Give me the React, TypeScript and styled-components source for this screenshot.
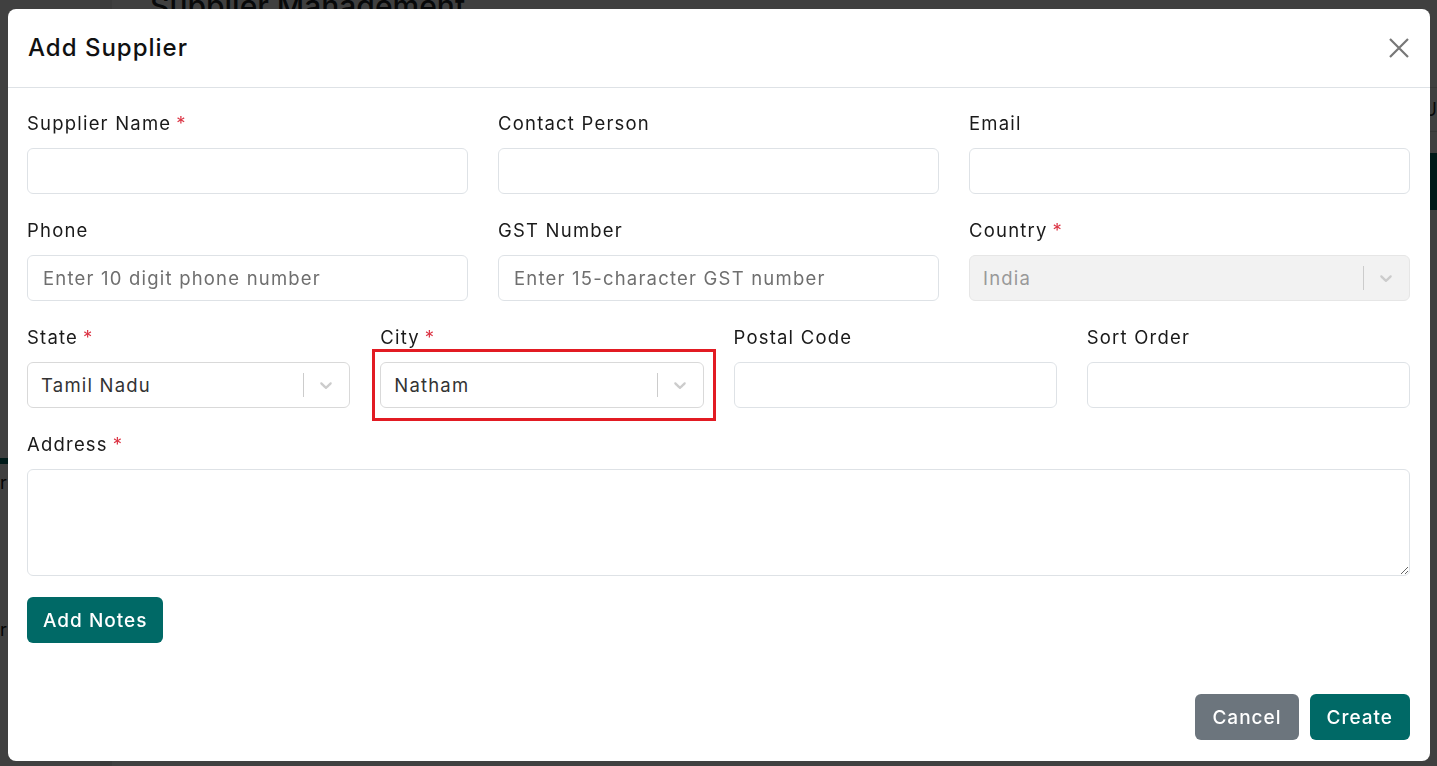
import React from "react";
import styled, { createGlobalStyle } from "styled-components";

const teal = "#006966";
const border = "#dee2e6";

const GlobalStyle = createGlobalStyle`
  html, body { margin: 0; padding: 0; }
  body {
    font-family: Inter, "Noto Sans", sans-serif;
    color: #212529;
    overflow: hidden;
  }
  * { box-sizing: border-box; }
`;

/* ---------- page behind the dialog ---------- */

const Page = styled.div`
  display: flex;
  height: 100vh;
  background: #fff;
`;

const Sidebar = styled.aside`
  width: 112px;
  flex-shrink: 0;
  border-right: 12px solid #e9e9e9;
  padding-top: 458px;
  display: flex;
  flex-direction: column;
`;

const NavItem = styled.div<{ $active?: boolean }>`
  height: 57px;
  display: flex;
  align-items: center;
  font-size: 18px;
  color: #111;
  background: ${(p) => (p.$active ? teal : "transparent")};
  margin-bottom: ${(p) => (p.$active ? "8px" : "126px")};
`;

const Main = styled.main`
  flex: 1;
  padding-left: 38px;
  display: flex;
  flex-direction: column;
`;

const PageTitle = styled.h1`
  margin: -12px 0 0;
  font-size: 30px;
  font-weight: 500;
  height: 100px;
  border-bottom: 1px solid #ddd;
`;

const Toolbar = styled.div`
  height: 44px;
  display: flex;
  justify-content: flex-end;
  align-items: center;
  font-size: 18px;
  border-bottom: 1px solid #ddd;
  margin-bottom: 21px;
`;

const TableHead = styled.div`
  height: 57px;
  background: ${teal};
`;

const Backdrop = styled.div`
  position: fixed;
  inset: 0;
  background: rgba(0, 0, 0, 0.75);
`;

/* ---------- dialog ---------- */

const Modal = styled.div`
  position: fixed;
  top: 9px;
  left: 8px;
  width: 1422px;
  height: 752px;
  background: #fff;
  border-radius: 8px;
  display: flex;
  flex-direction: column;
  letter-spacing: 1.2px;
`;

const Header = styled.header`
  height: 79px;
  flex-shrink: 0;
  display: flex;
  align-items: center;
  justify-content: space-between;
  padding: 0 19px 1px 20px;
  border-bottom: 1px solid ${border};
`;

const Title = styled.h2`
  margin: 0;
  font-size: 24px;
  font-weight: 500;
  letter-spacing: 1px;
  color: #111;
`;

const CloseButton = styled.button`
  border: 0;
  background: none;
  padding: 0;
  width: 24px;
  height: 24px;
  display: flex;
  align-items: center;
  justify-content: center;
  cursor: pointer;
`;

const Body = styled.div`
  padding: 22px 20px 0 19px;
  display: flex;
  flex-direction: column;
  gap: 23px;
`;

const Row = styled.div<{ $cols: number }>`
  display: grid;
  grid-template-columns: repeat(${(p) => p.$cols}, 1fr);
  column-gap: 30px;
`;

const Field = styled.div`
  display: flex;
  flex-direction: column;
  gap: 11px;
`;

const Label = styled.label`
  font-size: 18.5px;
  line-height: 27px;
  color: #1a1a1a;
`;

const Required = styled.span`
  color: #dc3545;
  margin-left: 5px;
`;

const Input = styled.input`
  height: 46px;
  width: 100%;
  border: 1px solid ${border};
  border-radius: 6px;
  padding: 0 15px;
  font-family: inherit;
  font-size: 18.5px;
  letter-spacing: 1.2px;
  color: #333;
  outline: none;
  &::placeholder { color: #6f6f6f; }
`;

const TextArea = styled.textarea`
  height: 107px;
  width: 100%;
  border: 1px solid ${border};
  border-radius: 6px;
  padding: 10px 15px;
  font-family: inherit;
  font-size: 18.5px;
  resize: vertical;
  outline: none;
`;

const SelectBox = styled.div<{ $disabled?: boolean }>`
  position: relative;
  height: 46px;
  display: flex;
  align-items: center;
  border: 1px solid ${(p) => (p.$disabled ? "#e6e6e6" : "#d9d9d9")};
  border-radius: 6px;
  background: ${(p) => (p.$disabled ? "#f2f2f2" : "#fff")};
  font-size: 18.5px;
`;

const SelectValue = styled.div<{ $disabled?: boolean }>`
  flex: 1;
  padding-left: 13px;
  color: ${(p) => (p.$disabled ? "#999" : "#333")};
`;

const Separator = styled.span`
  width: 1px;
  align-self: stretch;
  margin: 10px 0;
  background: #ccc;
`;

const Indicator = styled.span`
  display: flex;
  padding: 0 13px 0 12px;
  color: #ccc;
`;

const Highlight = styled.div`
  position: absolute;
  top: -14px;
  bottom: -14px;
  left: -9px;
  right: -13px;
  border: 3px solid #e21b23;
  pointer-events: none;
`;

const Button = styled.button<{ $variant?: "primary" | "secondary" }>`
  height: 46px;
  padding: 0 16px;
  border: 0;
  border-radius: 6px;
  background: ${(p) => (p.$variant === "secondary" ? "#6c757d" : teal)};
  color: #fff;
  font-family: inherit;
  font-size: 19px;
  font-weight: 500;
  letter-spacing: 1px;
  cursor: pointer;
`;

const NotesButton = styled(Button)`
  align-self: flex-start;
  margin-top: -2px;
`;

const Footer = styled.footer`
  margin-top: auto;
  display: flex;
  justify-content: flex-end;
  gap: 11px;
  padding: 0 20px 21px;

  ${Button} {
    padding: 0 17px;
  }
`;

function Chevron() {
  return (
    <svg width="20" height="20" viewBox="0 0 20 20" fill="currentColor">
      <path d="M4.516 7.548c0.436-0.446 1.043-0.481 1.576 0l3.908 3.747 3.908-3.747c0.533-0.481 1.141-0.446 1.574 0 0.436 0.445 0.408 1.197 0 1.615-0.406 0.418-4.695 4.502-4.695 4.502-0.217 0.223-0.502 0.335-0.787 0.335s-0.57-0.112-0.789-0.335c0 0-4.287-4.084-4.695-4.502s-0.436-1.170 0-1.615z" />
    </svg>
  );
}

type SelectProps = { value: string; disabled?: boolean; highlighted?: boolean };
function Select({ value, disabled, highlighted }: SelectProps) {
  return (
    <SelectBox $disabled={disabled}>
      <SelectValue $disabled={disabled}>{value}</SelectValue>
      <Separator />
      <Indicator>
        <Chevron />
      </Indicator>
      {highlighted && <Highlight />}
    </SelectBox>
  );
}

type FieldProps = { label: string; required?: boolean; children: React.ReactNode };
function FormField({ label, required, children }: FieldProps) {
  return (
    <Field>
      <Label>
        {label}
        {required && <Required>*</Required>}
      </Label>
      {children}
    </Field>
  );
}

export default function App() {
  return (
    <>
      <GlobalStyle />
      <Page>
        <Sidebar>
          <NavItem $active />
          <NavItem>r</NavItem>
          <NavItem>r</NavItem>
        </Sidebar>
        <Main>
          <PageTitle>Supplier Management</PageTitle>
          <Toolbar>U</Toolbar>
          <TableHead />
        </Main>
      </Page>
      <Backdrop />
      <Modal>
        <Header>
          <Title>Add Supplier</Title>
          <CloseButton aria-label="Close">
            <svg width="22" height="22" viewBox="0 0 22 22">
              <path d="M2 2L20 20M20 2L2 20" stroke="#777" strokeWidth="2.2" />
            </svg>
          </CloseButton>
        </Header>
        <Body>
          <Row $cols={3}>
            <FormField label="Supplier Name" required>
              <Input />
            </FormField>
            <FormField label="Contact Person">
              <Input />
            </FormField>
            <FormField label="Email">
              <Input />
            </FormField>
          </Row>
          <Row $cols={3}>
            <FormField label="Phone">
              <Input placeholder="Enter 10 digit phone number" />
            </FormField>
            <FormField label="GST Number">
              <Input placeholder="Enter 15-character GST number" />
            </FormField>
            <FormField label="Country" required>
              <Select value="India" disabled />
            </FormField>
          </Row>
          <Row $cols={4}>
            <FormField label="State" required>
              <Select value="Tamil Nadu" />
            </FormField>
            <FormField label="City" required>
              <Select value="Natham" highlighted />
            </FormField>
            <FormField label="Postal Code">
              <Input />
            </FormField>
            <FormField label="Sort Order">
              <Input />
            </FormField>
          </Row>
          <Row $cols={1}>
            <FormField label="Address" required>
              <TextArea />
            </FormField>
          </Row>
          <NotesButton>Add Notes</NotesButton>
        </Body>
        <Footer>
          <Button $variant="secondary">Cancel</Button>
          <Button>Create</Button>
        </Footer>
      </Modal>
    </>
  );
}
